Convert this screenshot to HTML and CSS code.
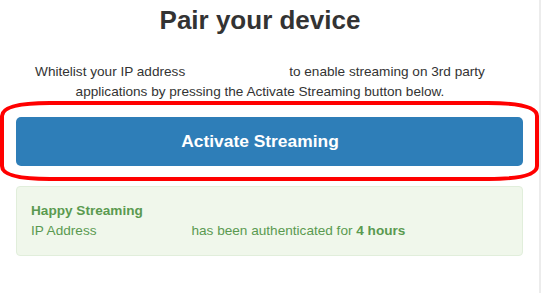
FILE: index.html
```html
<!DOCTYPE html>
<html lang="en">
  <head>
    <meta charset="UTF-8" />
    <meta name="viewport" content="width=device-width, initial-scale=1.0" />
    <title>Pair your device</title>
    <link rel="stylesheet" href="styles.css">
  </head>
  <body>
    <div class="page">
      <div class="intro">
        <h1>Pair your device</h1>
        <p>
          Whitelist your IP address<span class="ip"></span>to enable streaming on 3rd party
          applications by pressing the Activate Streaming button below.
        </p>
      </div>

      <button class="activate">Activate Streaming</button>

      <div class="alert">
        <strong>Happy Streaming</strong><br />
        IP Address<span class="ip ip-small"></span>has been authenticated for <strong>4 hours</strong>
      </div>

      <!-- red marker drawn round the button -->
      <svg class="marker" width="541" height="293" viewBox="0 0 541 293">
        <path d="M 50 103 H 488 Q 537 103 537 116 V 166 Q 537 179 488 179 H 50 Q 2 179 2 166 V 116 Q 2 103 50 103 Z"
          fill="none" stroke="#ff0000" stroke-width="4" />
      </svg>
    </div>
  </body>
</html>
```

FILE: styles.css
```css
body {
  margin: 0;
  padding: 0;
  background-color: #ffffff;
}
.page {
  position: relative;
  width: 507px;
  height: 293px;
  padding: 0 16px;
  border-right: 2px solid #ececec;
  font-family: "Liberation Sans", Arial, sans-serif;
  color: #333333;
}
.intro {
  padding-top: 5px;
  padding-right: 19px;
  text-align: center;
}
h1 {
  margin: 0;
  font-size: 26px;
  line-height: 30px;
  font-weight: bold;
}
p {
  margin: 27px 0 0;
  font-size: 13.6px;
  line-height: 20px;
}
.ip {
  display: inline-block;
  width: 104px;
}
.ip-small {
  width: 95px;
}
.activate {
  display: block;
  width: 100%;
  height: 49px;
  margin-top: 15px;
  padding: 0 19px 0 0;
  border: none;
  border-radius: 5px;
  background-color: #2e7eb8;
  color: #ffffff;
  font-family: "Liberation Sans", Arial, sans-serif;
  font-size: 17.4px;
  font-weight: bold;
  cursor: pointer;
}
.alert {
  margin-top: 20px;
  padding: 14px;
  border: 1px solid #e1eedb;
  border-radius: 4px;
  background-color: #f0f7eb;
  color: #5a9a50;
  font-size: 13.6px;
  line-height: 20px;
}
.marker {
  position: absolute;
  top: 0;
  left: 0;
  pointer-events: none;
}
```
